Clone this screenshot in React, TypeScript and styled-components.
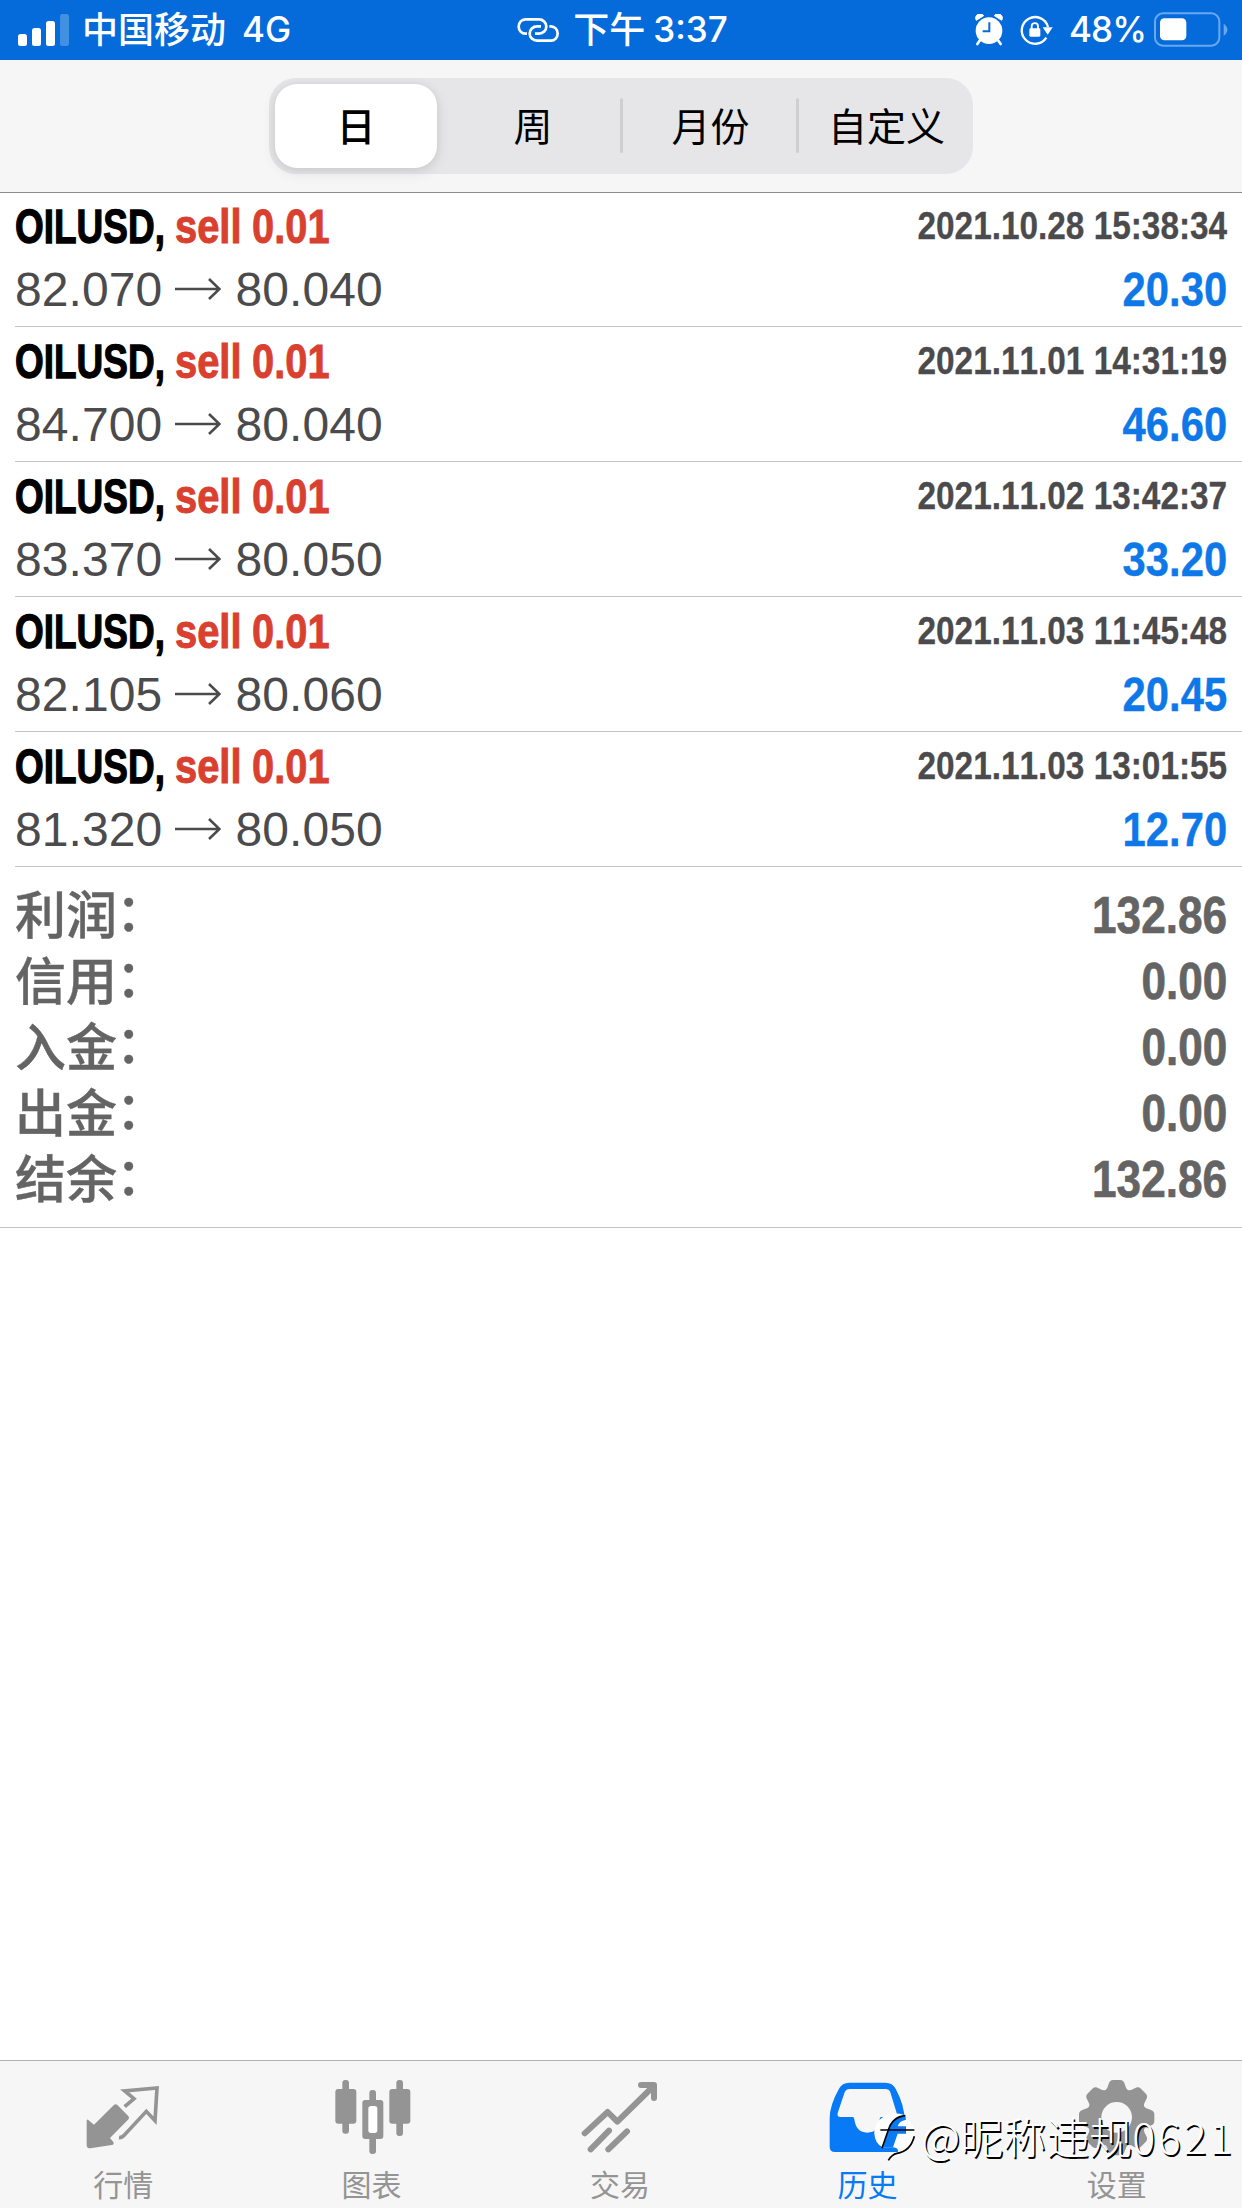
import React from "react";
import styled, { createGlobalStyle } from "styled-components";

const latin = `"Liberation Sans", "Noto Sans CJK SC", sans-serif`;
const system = `Inter, "Noto Sans CJK SC", sans-serif`;
const cjk = `"Noto Sans CJK SC", sans-serif`;

const GlobalStyle = createGlobalStyle`
  * { box-sizing: border-box; }
  body { margin: 0; background: #fff; }
`;

const Screen = styled.div`
  position: relative;
  display: flex;
  flex-direction: column;
  width: 1242px;
  height: 2208px;
  overflow: hidden;
  background: #fff;
  font-family: ${latin};
`;

const StatusBar = styled.header`
  display: grid;
  grid-template-columns: 1fr auto 1fr;
  align-items: center;
  height: 60px;
  flex: none;
  padding: 0 14px 0 18px;
  background: #056bda;
  color: #fff;
  font: 500 35px/60px ${system};
`;

const StatusGroup = styled.div<{ $end?: boolean }>`
  display: flex;
  align-items: center;
  justify-content: ${(p) => (p.$end ? "flex-end" : "flex-start")};
  height: 60px;
  margin-left: ${(p) => (p.$end ? 0 : -1)}px;
`;

const StatusText = styled.span<{ $left: number; $size?: number; $spacing?: number; $cjk?: boolean }>`
  flex: none;
  height: 60px;
  margin: ${(p) => (p.$cjk ? -6 : -2)}px 0 0 ${(p) => p.$left}px;
  font-family: ${(p) => (p.$cjk ? cjk : system)};
  font-size: ${(p) => p.$size ?? 35}px;
  font-weight: ${(p) => (p.$cjk ? 500 : 450)};
  letter-spacing: ${(p) => p.$spacing ?? 0}px;
  white-space: nowrap;
`;

const Glyph = styled.svg<{ $left?: number }>`
  display: block;
  flex: none;
  margin: 0 0 1px ${(p) => p.$left ?? 0}px;
`;

const Toolbar = styled.div`
  display: flex;
  justify-content: center;
  align-items: flex-start;
  flex: none;
  height: 133px;
  padding-top: 18px;
  background: #f6f6f6;
  border-bottom: 1px solid #8b8b8b;
`;

const Segmented = styled.div`
  display: grid;
  grid-template-columns: repeat(4, 1fr);
  width: 704px;
  height: 96px;
  padding: 6px 0;
  border-radius: 27px;
  background: #e6e6e8;
`;

const Segment = styled.button<{ $active?: boolean; $divider?: boolean }>`
  display: flex;
  align-items: center;
  justify-content: center;
  position: relative;
  height: 84px;
  margin: ${(p) => (p.$active ? "0 8px 0 6px" : "0")};
  padding: 0 0 4px ${(p) => (p.$divider ? 3 : 0)}px;
  border: 0;
  border-radius: 22px;
  background: ${(p) => (p.$active ? "#fff" : "transparent")};
  box-shadow: ${(p) => (p.$active ? "0 4px 14px rgba(0, 0, 0, 0.1), 0 0 8px rgba(0, 0, 0, 0.05)" : "none")};
  color: #000;
  font: ${(p) => (p.$active ? 500 : 400)} 39px/56px ${cjk};

  &::before {
    content: "";
    display: ${(p) => (p.$divider ? "block" : "none")};
    position: absolute;
    left: -1px;
    top: 14px;
    width: 3px;
    height: 55px;
    border-radius: 2px;
    background: #cfcfd2;
  }
`;

const DealList = styled.ul`
  flex: none;
  margin: 0;
  padding: 0 0 0 15px;
  list-style: none;
  background: #fff;
`;

const Deal = styled.li`
  display: flex;
  flex-direction: column;
  height: 135px;
  padding: 2px 15px 0 0;
  border-bottom: 1px solid #c4c4c6;

  &:first-child { height: 134px; padding-top: 1px; }
`;

const DealLine = styled.div<{ $height: number }>`
  display: flex;
  justify-content: space-between;
  align-items: center;
  height: ${(p) => p.$height}px;
`;

const DealTitle = styled.div`
  display: flex;
  padding-top: 2px;
`;

const Condensed = styled.span<{
  $size: number;
  $scale: number;
  $color: string;
  $width?: number;
  $right?: boolean;
  $weight?: number;
}>`
  display: block;
  width: ${(p) => (p.$width ? `${p.$width}px` : "auto")};
  color: ${(p) => p.$color};
  font: 700 ${(p) => p.$size}px/64px ${latin};
  font-kerning: none;
  white-space: nowrap;
  transform: scaleX(${(p) => p.$scale});
  transform-origin: ${(p) => (p.$right ? "right" : "left")} center;
  -webkit-text-stroke: ${(p) => p.$weight ?? 0}px ${(p) => p.$color};
`;

const Prices = styled.div`
  display: flex;
  align-items: center;
  color: #4b4b4d;
  font: 400 48px/64px ${latin};
  font-kerning: none;
  letter-spacing: 0.1px;
`;

const Arrow = styled.svg`
  display: block;
  margin: 0 14px 2px 13px;
`;

const Summary = styled.dl`
  flex: none;
  height: 361px;
  margin: 0;
  padding: 16px 15px 0;
  border-bottom: 1px solid #c4c4c6;
`;

const SummaryRow = styled.div`
  display: flex;
  justify-content: space-between;
  align-items: center;
  height: 66px;
`;

const SummaryLabel = styled.dt`
  padding-top: 2px;
  color: #646464;
  font: 500 51px/66px ${latin};
  -webkit-text-stroke: 0.4px #646464;
`;

const Colon = styled.span`
  display: inline-block;
  line-height: 50px;
  transform: translate(-1px, -3px);
`;

const SummaryValue = styled.dd`
  margin: 0;
`;

const Empty = styled.main`
  flex: 1;
`;

const TabBar = styled.nav`
  display: grid;
  grid-template-columns: repeat(5, 1fr);
  flex: none;
  height: 148px;
  background: #f6f6f6;
  border-top: 1px solid #b0b0b2;
`;

const Tab = styled.a<{ $active?: boolean }>`
  display: flex;
  flex-direction: column;
  align-items: center;
  padding-top: 16px;
  color: ${(p) => (p.$active ? "#087af5" : "#949494")};
  font: 400 30px/44px ${cjk};
`;

const TabLabel = styled.span<{ $active?: boolean }>`
  margin: 4px ${(p) => (p.$active ? 4 : 2)}px 0 0;
`;

const Watermark = styled.div`
  position: absolute;
  left: 872px;
  top: 2103px;
  display: flex;
  align-items: center;
  color: #fff;
  font: 300 43px/64px ${cjk};
  text-shadow: 1.5px 1.5px 0.5px #000;
  white-space: nowrap;
`;

const WatermarkText = styled.span`
  margin-left: -1px;
`;

const WatermarkDigits = styled.span`
  letter-spacing: 2.7px;
`;

const BLUE = "#0f78e8";

const deals = [
  { open: "82.070", close: "80.040", time: "2021.10.28 15:38:34", profit: "20.30" },
  { open: "84.700", close: "80.040", time: "2021.11.01 14:31:19", profit: "46.60" },
  { open: "83.370", close: "80.050", time: "2021.11.02 13:42:37", profit: "33.20" },
  { open: "82.105", close: "80.060", time: "2021.11.03 11:45:48", profit: "20.45" },
  { open: "81.320", close: "80.050", time: "2021.11.03 13:01:55", profit: "12.70" },
];

const totals = [
  ["利润", "132.86"],
  ["信用", "0.00"],
  ["入金", "0.00"],
  ["出金", "0.00"],
  ["结余", "132.86"],
];

const Signal = () => (
  <Glyph width="52" height="32" viewBox="0 0 52 32" fill="#fff" $left={1}>
    <rect x="0" y="20" width="9" height="12" rx="2.5" />
    <rect x="14" y="14" width="9" height="18" rx="2.5" />
    <rect x="28" y="7" width="9" height="25" rx="2.5" />
    <rect x="42" y="0" width="9" height="32" rx="2.5" opacity="0.25" />
  </Glyph>
);

const Hotspot = () => (
  <Glyph width="42" height="26" viewBox="286 48 126 78" fill="none" stroke="#fff" strokeWidth="8" strokeLinecap="butt">
    <path d="M316 98H311a20 21.500 0 0 1 0-43H352a22 21.500 0 0 1 0 43H340" />
    <path d="M383 76H388a20 21.500 0 0 1 0 43H346a22 21.500 0 0 1 0-43H358" />
  </Glyph>
);

const Alarm = () => (
  <Glyph width="28" height="32" viewBox="409 37 84 96">
    <circle cx="451" cy="87" r="40" fill="#fff" />
    <path d="M413 56a13 13 0 0 1 22-14zM489 56a13 13 0 0 0-22-14z" fill="#fff" stroke="#fff" strokeWidth="3" strokeLinejoin="round" />
    <path d="M424 116l-8 11M478 116l8 11" stroke="#fff" strokeWidth="8" strokeLinecap="round" />
    <path d="M452 62v27h-20" fill="none" stroke="#056bda" strokeWidth="6" />
  </Glyph>
);

const RotationLock = () => (
  <Glyph width="33" height="32" viewBox="544 41 99 96" $left={17}>
    <path d="M623 112A40 40 0 1 1 628 80" fill="none" stroke="#fff" strokeWidth="7" />
    <path d="M612 81h30l-15 22z" fill="#fff" />
    <rect x="572" y="84" width="33" height="25" rx="4" fill="#fff" />
    <path d="M579 86v-8a9.500 9.500 0 0 1 19 0v8" fill="none" stroke="#fff" strokeWidth="5.500" />
  </Glyph>
);

const Battery = () => (
  <Glyph width="74" height="36" viewBox="941 35 222 108" $left={8}>
    <rect x="944" y="39" width="193" height="97" rx="24" fill="none" stroke="#69a8f0" strokeWidth="6" />
    <rect x="959" y="54" width="79" height="66" rx="13" fill="#fff" />
    <path d="M1150 70q11 7 11 18t-11 18z" fill="#69a8f0" />
  </Glyph>
);

const QuotesIcon = () => (
  <svg width="80" height="80" viewBox="253 81 240 240">
    <path
      d="M265 209l18 15 59-58q6-6 12 0l31 31q6 6 0 12l-54 55 10 12q4 8-5 9l-64 10q-11 1-11-9v-72q0-8 4-5z"
      fill="#949494"
    />
    <path
      d="M375 170l28-24-28-23 97-9-6 98-26-28-64 69q-9 11-18 10"
      fill="none"
      stroke="#949494"
      strokeWidth="11"
      strokeLinejoin="miter"
    />
  </svg>
);

const ChartIcon = () => (
  <svg width="80" height="80" viewBox="998 81 240 240" fill="#949494">
    <rect x="1026" y="90" width="20" height="161" rx="9" />
    <rect x="1005" y="117" width="63" height="104" rx="9" />
    <rect x="1188" y="90" width="20" height="168" rx="9" />
    <rect x="1167" y="117" width="63" height="104" rx="9" />
    <rect x="1107" y="120" width="20" height="192" rx="9" />
    <rect x="1086" y="150" width="63" height="117" rx="9" />
    <rect x="1104" y="168" width="27" height="81" rx="8" fill="#fff" />
  </svg>
);

const TradeIcon = () => (
  <svg
    width="80"
    height="80"
    viewBox="123 81 240 240"
    fill="none"
    stroke="#949494"
    strokeWidth="18"
    strokeLinecap="round"
    strokeLinejoin="round"
  >
    <path d="M134 250l69-64 29 29 106-104M303 105h39v39" />
    <path d="M152 298l55-56M205 298l56-54" />
  </svg>
);

const HistoryIcon = () => (
  <svg width="80" height="80" viewBox="868 81 240 240">
    <path
      fillRule="evenodd"
      fill="#087af5"
      d="M929 98h108q22 0 31 18 27 50 27 96v78q0 16-16 16H886q-16 0-16-16v-86q0-38 28-88 9-18 31-18z
         M930 117q-10 0-15 10l-21 62q-3 12 9 12h36q4 0 5 7 5 40 39 40t37-40q0-7 5-7h37q12 0 9-12l-19-62q-4-10-15-10z"
    />
  </svg>
);

// Eight rounded teeth around a ring with a round opening.
const SettingsIcon = () => (
  <svg width="80" height="80" viewBox="833 81 240 240">
    <g fill="#949494">
      {Array.from({ length: 8 }, (_, i) => (
        <path
          key={i}
          d="M913 124q9-8 12-22 3-12 14-12h20q11 0 14 12 3 14 12 22z"
          transform={`rotate(${i * 45} 949 203)`}
        />
      ))}
      <circle cx="949" cy="203" r="89" />
    </g>
    <circle cx="949" cy="202" r="46" fill="#f6f6f6" />
  </svg>
);

const WatermarkLogo = () => (
  <svg width="50" height="60" viewBox="216 182 150 180" fill="none">
    <path
      d="M312 212C270 197 222 222 223 268Q225 298 248 309H280Q300 312 292 326 276 330 268 342 325 335 342 276V256Q335 228 312 216z"
      fill="#fff"
    />
    <path d="M316 215Q277 219 266 257L249 309H279L293 268H318V246H293Q297 230 318 226z" fill="#087af5" />
    <path d="M316 214Q278 217 265 257L246 312" stroke="#000" strokeWidth="5" />
    <path d="M241 257H343" stroke="#000" strokeWidth="5" />
    <path d="M343 276Q331 322 291 327 276 330 265 348" stroke="#000" strokeWidth="5" />
  </svg>
);

const tabs = [
  { label: "行情", icon: <QuotesIcon /> },
  { label: "图表", icon: <ChartIcon /> },
  { label: "交易", icon: <TradeIcon /> },
  { label: "历史", icon: <HistoryIcon />, active: true },
  { label: "设置", icon: <SettingsIcon /> },
];

export default function App() {
  return (
    <Screen>
      <GlobalStyle />
      <StatusBar>
        <StatusGroup>
          <Signal />
          <StatusText $cjk $left={12} $size={36}>中国移动</StatusText>
          <StatusText $left={16}>4G</StatusText>
        </StatusGroup>
        <StatusGroup>
          <Hotspot />
          <StatusText $cjk $left={14} $size={36}>下午</StatusText>
          <StatusText $left={8}>3:37</StatusText>
        </StatusGroup>
        <StatusGroup $end>
          <Alarm />
          <RotationLock />
          <StatusText $left={16} $spacing={-0.9}>48%</StatusText>
          <Battery />
        </StatusGroup>
      </StatusBar>

      <Toolbar>
        <Segmented>
          <Segment $active>日</Segment>
          <Segment>周</Segment>
          <Segment $divider>月份</Segment>
          <Segment $divider>自定义</Segment>
        </Segmented>
      </Toolbar>

      <DealList>
        {deals.map((d) => (
          <Deal key={d.time}>
            <DealLine $height={64}>
              <DealTitle>
                <Condensed $size={48} $scale={0.77} $color="#000" $width={160} $weight={1.3}>OILUSD,</Condensed>
                <Condensed $size={48} $scale={0.83} $color="#d9402f" $width={77} $weight={1}>sell</Condensed>
                <Condensed $size={48} $scale={0.83} $color="#d9402f" $width={78} $weight={0.8}>0.01</Condensed>
              </DealTitle>
              <Condensed $size={39} $scale={0.855} $color="#4b4b4d" $right $weight={0.3}>{d.time}</Condensed>
            </DealLine>
            <DealLine $height={64}>
              <Prices>
                {d.open}
                <Arrow width="46" height="22" viewBox="0 0 46 22" fill="none" stroke="#4b4b4d" strokeWidth="2.6">
                  <path d="M0 11H44M34 1L44.500 11L34 21" />
                </Arrow>
                {d.close}
              </Prices>
              <Condensed $size={48} $scale={0.87} $color={BLUE} $right $weight={0.4}>{d.profit}</Condensed>
            </DealLine>
          </Deal>
        ))}
      </DealList>

      <Summary>
        {totals.map(([label, value]) => (
          <SummaryRow key={label}>
            <SummaryLabel>
              {label}
              <Colon>：</Colon>
            </SummaryLabel>
            <SummaryValue>
              <Condensed $size={51} $scale={0.865} $color="#646464" $right $weight={0.7}>{value}</Condensed>
            </SummaryValue>
          </SummaryRow>
        ))}
      </Summary>

      <Empty />

      <TabBar>
        {tabs.map((t) => (
          <Tab key={t.label} $active={t.active}>
            {t.icon}
            <TabLabel $active={t.active}>{t.label}</TabLabel>
          </Tab>
        ))}
      </TabBar>

      <Watermark>
        <WatermarkLogo />
        <WatermarkText>@昵称违规</WatermarkText>
        <WatermarkDigits>0621</WatermarkDigits>
      </Watermark>
    </Screen>
  );
}
